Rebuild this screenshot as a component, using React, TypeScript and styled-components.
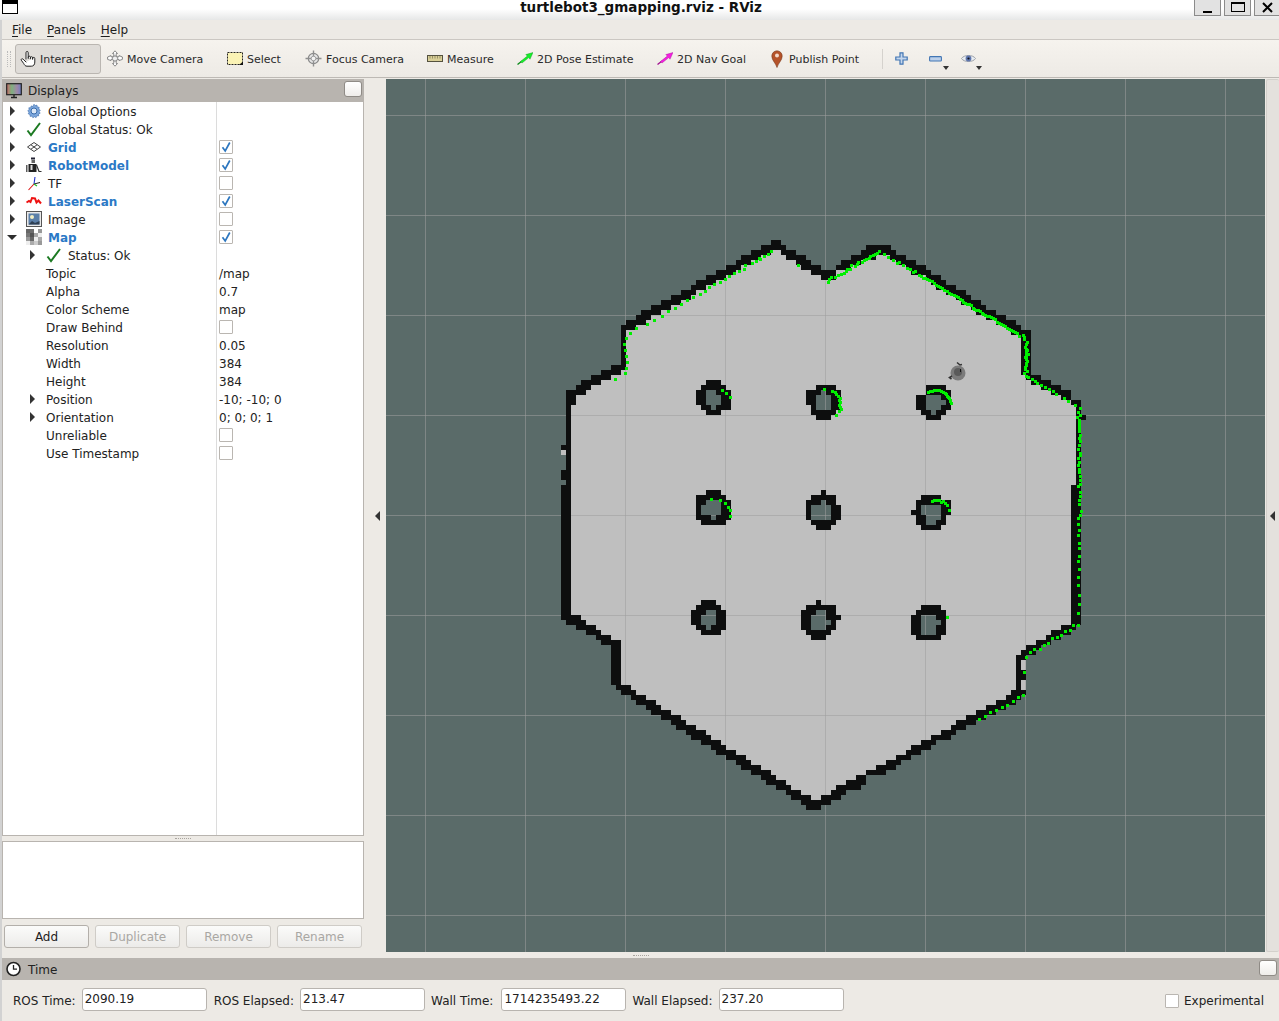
import React from "react";
import styled, { createGlobalStyle } from "styled-components";

const Global = createGlobalStyle`
  html, body { margin: 0; padding: 0; background: #edeae5; }
  * { box-sizing: border-box; }
  body { font-family: "DejaVu Sans", "Liberation Sans", sans-serif; font-size: 12px; color: #1d1d1d; }
`;

const Window = styled.div`width:1279px;height:1021px;overflow:hidden;display:flex;flex-direction:column;background:#edeae5;`;
const TitleBar = styled.div`height:20px;flex:none;display:grid;grid-template-columns:1fr auto 1fr;background:linear-gradient(#fff 0,#fff 45%,#e6e7e7 100%);overflow:hidden;padding-left:3px;`;
const AppGlyph = styled.div`width:16px;height:14px;margin-left:-1px;border:1px solid #000;border-top-width:4px;background:#fff;`;
const Title = styled.div`font-weight:700;font-size:13.5px;line-height:14px;color:#111;white-space:nowrap;`;
const WinButtons = styled.div`display:flex;justify-content:flex-end;gap:3px;`;
const WinBtn = styled.div<{ $w: number }>`width:${p => p.$w}px;height:16px;background:#e2e2e2;border:1px solid #8b8b8b;border-top:none;border-right-width:${p => p.$w < 27 ? 0 : 1}px;display:flex;align-items:center;justify-content:center;`;
const Body = styled.div`flex:1;min-height:0;display:flex;flex-direction:column;border-left:2px solid #d2d2d2;`;
const MenuBar = styled.div`height:20px;flex:none;display:flex;align-items:center;padding:0 0 0 10px;gap:15px;border-bottom:1px solid #cbc7c2;background:#edeae5;`;
const MenuItem = styled.span`font-size:12px;u{text-decoration-thickness:1px;text-underline-offset:2px;}`;
const ToolBar = styled.div`height:38px;flex:none;display:flex;align-items:center;padding:0 0 0 5px;background:linear-gradient(#f6f3ee,#edeae5);border-bottom:1px solid #bdb9b4;`;
const Grip = styled.div`width:4px;height:16px;margin-right:4px;border-left:1px dotted #bbb;border-right:1px dotted #bbb;`;
const ToolBtn = styled.div<{ $w: number; $on?: boolean }>`width:${p => p.$w}px;height:30px;flex:none;display:flex;align-items:center;gap:4px;padding-left:4px;font-size:11px;color:#2b2b2b;border-radius:3px;
  ${p => p.$on ? "background:#dfdcd8;border:1px solid #bab6b1;" : ""}`;
const ToolText = styled.span<{ $ml?: number }>`margin-top:2px;margin-left:${p => p.$ml ?? 0}px;`;
const ToolGap = styled.span`width:2px;flex:none;`;
const ToolSep = styled.div`width:1px;height:20px;background:#d5d2cd;margin:0 6px 0 3px;flex:none;`;
const IconBtn = styled.div<{ $w: number }>`width:${p => p.$w}px;height:30px;flex:none;position:relative;display:flex;align-items:center;padding-left:6px;`;
const Caret = styled.span<{ $r: number }>`position:absolute;right:${p => p.$r}px;bottom:4px;border:3px solid transparent;border-top:4px solid #333;border-bottom:none;`;
const Main = styled.div`flex:none;height:873px;margin-top:1px;display:flex;`;
const Dock = styled.div`width:362px;flex:none;display:flex;flex-direction:column;`;
const PanelHead = styled.div<{ $h: number }>`height:${p => p.$h}px;flex:none;display:flex;align-items:center;gap:6px;padding-left:4px;background:#b8b4af;color:#222;font-size:12px;position:relative;`;
const HeadText = styled.span<{ $dy: number }>`margin-top:${p => p.$dy}px;`;
const FloatBtn = styled.div`position:absolute;right:2px;top:2px;width:18px;height:16px;background:linear-gradient(#fff,#efedea);border:1px solid #8f8b86;border-radius:3px;`;
const Tree = styled.div`flex:1;min-height:0;background:linear-gradient(90deg,#fff 213px,#dcdcdc 213px,#dcdcdc 214px,#fff 214px);border:1px solid #b8b4af;border-top:none;`;
const Row = styled.div`height:18px;display:grid;grid-template-columns:214px 1fr;align-items:center;`;
const NameCell = styled.div<{ $indent: number }>`display:flex;align-items:center;padding-left:${p => p.$indent}px;height:18px;white-space:nowrap;`;
const ArrowSlot = styled.span`width:8px;flex:none;display:flex;justify-content:center;`;
const Tri = styled.span<{ $open?: boolean }>`display:block;width:0;height:0;${p => p.$open
  ? "border-left:5px solid transparent;border-right:5px solid transparent;border-top:5px solid #2d2d2d;margin-left:-1px;"
  : "border-top:5px solid transparent;border-bottom:5px solid transparent;border-left:5px solid #333;"}`;
const IconSlot = styled.span`width:16px;height:16px;flex:none;margin:0 6px 0 10px;display:flex;align-items:center;justify-content:center;`;
const Label = styled.span<{ $link?: boolean }>`padding-top:2px;${p => p.$link ? "font-weight:700;color:#2b79c6;" : "color:#222;"}`;
const PlainName = styled.span`color:#222;margin-left:10px;padding-top:2px;`;
const ValueCell = styled.div`padding:2px 0 0 2px;color:#222;display:flex;align-items:center;`;
const Check = styled.span<{ $dy?: number }>`width:14px;height:14px;margin-top:${p => p.$dy ?? 0}px;border:1px solid #bab6b1;background:#fff;border-radius:1px;display:flex;align-items:center;justify-content:center;flex:none;`;
const Splitter = styled.div<{ $h: number }>`height:${p => p.$h}px;flex:none;display:flex;align-items:center;justify-content:center;`;
const Dots = styled.i`display:block;width:16px;border-top:1px dotted #a8a49f;`;
const Description = styled.div`height:78px;flex:none;background:#fff;border:1px solid #b8b4af;`;
const BtnRow = styled.div`flex:none;height:33px;display:flex;gap:6px;padding:6px 0 4px 2px;`;
const PushBtn = styled.button<{ $off?: boolean }>`width:85px;height:23px;padding:0;font:12px "DejaVu Sans",sans-serif;border-radius:3px;
  color:${p => p.$off ? "#a9a7a3" : "#1d1d1d"};border:1px solid ${p => p.$off ? "#cfccc7" : "#b3afaa"};background:linear-gradient(#fbfbfa,#ecebe9);`;
const LeftHandle = styled.div`width:22px;flex:none;display:flex;align-items:center;justify-content:flex-end;padding-right:6px;`;
const TriLeft = styled.span`width:0;height:0;border-top:5px solid transparent;border-bottom:5px solid transparent;border-right:5px solid #333;`;
const Viewport = styled.div`width:879px;flex:none;background:#5a6b69;`;
const MapSvg = styled.svg`display:block;width:879px;height:873px;shape-rendering:crispEdges;`;
const RightHandle = styled.div`width:13px;margin-left:1px;flex:none;background:#e4e1dd;border:1px solid #d3d0cb;border-right:none;border-radius:2px;display:flex;align-items:center;justify-content:center;padding-right:2px;`;
const TimeRow = styled.div`flex:1;display:flex;align-items:center;padding:0 15px 2px 11px;font-size:12px;position:relative;`;
const TimeLabel = styled.span`margin:2px 6px 0 0;color:#222;white-space:nowrap;`;
const TimeInput = styled.input<{ $w: number; $gap: number; $ml?: number }>`width:${p => p.$w}px;height:23px;flex:none;margin-right:${p => p.$gap}px;margin-left:${p => p.$ml ?? 0}px;padding:0 2px 1px;font:12px "DejaVu Sans",sans-serif;color:#222;background:#fff;border:1px solid #b8b4af;border-radius:3px;outline:none;`;
const Experimental = styled.div`margin:2px 0 0 auto;display:flex;align-items:center;gap:5px;color:#222;`;

/* ---------- icons ---------- */
const S = ({ w = 16, h = 16, children }: { w?: number; h?: number; children: React.ReactNode }) => (
  <svg width={w} height={h} viewBox={`0 0 ${w} ${h}`} fill="none" style={{ flex: "none", display: "block" }}>{children}</svg>
);
const HandIcon = () => <S h={18}><path d="M6 9V2.6a1.1 1.1 0 0 1 2.2 0V8.500M8.200 7.300a1.100 1.100 0 0 1 2.200 0v1.500M10.400 7.800a1.100 1.100 0 0 1 2.200 0V9.300M12.600 8.500a1.100 1.100 0 0 1 2.200 0v3.500c0 2.700-1.300 4.200-3.500 4.200H7c-1.800 0-2.400-1.100-3.300-2.700L1.300 10.200c-.6-1.100.8-2 1.800-1L6 12" stroke="#222" strokeWidth="1" strokeLinecap="round" strokeLinejoin="round" fill="#fff"/></S>;
const MoveIcon = () => <S h={17}><path d="M8 .8l2.500 2.700H9.200v2.800h-2.400V3.500H5.500zM8 16.200l2.500-2.700H9.200v-2.800h-2.400v2.800H5.500zM.6 7l3.400-1.400v1.200h2v2.600H4v1.200L.6 9.400zM15.400 7L12 5.600v1.200h-2v2.600h2v1.200l3.400-1.200z" fill="#fff" stroke="#7d7d7d" strokeWidth=".9"/><circle cx="8" cy="8.500" r="2.600" fill="#eee" stroke="#8a8a8a"/></S>;
const SelectIcon = () => <S><rect x=".5" y="1.500" width="15" height="12" fill="#fbf3b5" stroke="#222" strokeDasharray="2 1"/><path d="M12 14h4v-3.500z" fill="#111"/></S>;
const FocusIcon = () => <S w={17} h={17}><circle cx="8.500" cy="8.500" r="5.200" fill="#e6e6e6" stroke="#8a8a8a" strokeWidth="1.200"/><path d="M8.500.5v16M.5 8.500h16" stroke="#8f8f8f" strokeWidth="1.400"/><circle cx="8.500" cy="8.500" r="2.300" fill="#f3f3f3" stroke="#a0a0a0"/></S>;
const MeasureIcon = () => <S h={12}><rect x=".5" y="2.500" width="15" height="6" fill="#d9cf97" stroke="#55523f"/><path d="M3 3v2.500M5.500 3v2.500M8 3v2.500M10.500 3v2.500M13 3v2.500" stroke="#7a7453" strokeWidth=".7"/></S>;
const ArrowIcon = ({ c, d }: { c: string; d: string }) => <S h={13}><path d="M.5 12.500L5 9" stroke={d} strokeWidth="1.300"/><path d="M16 .5L8.800 2.600l1.500 1.500L3.500 9.500l1.500 1.500 6.800-5.400 1.200 1.600z" fill={c} stroke={d} strokeWidth=".4"/></S>;
const PinIcon = () => <S w={12} h={18}><path d="M6 17.500C4.800 13 .8 10.500.8 6a5.200 5.200 0 0 1 10.400 0c0 4.500-4 7-5.200 11.500z" fill="#b5532a" stroke="#7b3a1f" strokeWidth=".6"/><circle cx="6" cy="5.500" r="2" fill="#f3d9c9"/></S>;
const PlusIcon = () => <S w={13} h={13}><path d="M5 .8h3V5h4.200v3H8v4.200H5V8H.8V5H5z" fill="#c5d6ec" stroke="#4276b4" strokeWidth="1.200"/></S>;
const MinusIcon = () => <S w={13} h={6}><rect x=".6" y=".6" width="11.800" height="4.400" rx=".8" fill="#bcd0ea" stroke="#4276b4" strokeWidth="1.100"/></S>;
const EyeIcon = () => <S w={15} h={11}><path d="M.5 5.500C3 1.500 12 1.500 14.500 5.500 12 9.500 3 9.500 .5 5.500z" fill="#e9edf2" stroke="#9aa0a8"/><circle cx="7.500" cy="5.500" r="2.900" fill="#5f76ad"/><circle cx="7.500" cy="5.500" r="1.100" fill="#10141f"/></S>;
const MonitorIcon = () => <S><rect x=".7" y=".7" width="14.600" height="11" fill="url(#mon)" stroke="#222" strokeWidth="1.200"/><path d="M5 14.500h6M8 12v2" stroke="#222" strokeWidth="1.400"/><defs><linearGradient id="mon" x1="0" x2="1" y1="0" y2="0"><stop offset="0" stopColor="#c86a6a"/><stop offset=".35" stopColor="#7fb07f"/><stop offset=".7" stopColor="#a088a8"/><stop offset="1" stopColor="#6d7fc0"/></linearGradient></defs></S>;
const GearIcon = () => <S><path d="M8 1.200l1.100 1.500 1.800-.6.400 1.900 1.900.3-.5 1.900 1.600 1-1.200 1.500 1.100 1.500-1.700.8.200 1.900-1.900-.1-.7 1.800-1.700-.9L6.900 14.800 6 13.100l-1.900.3L4 11.500l-1.800-.7.900-1.700L1.700 7.800l1.500-1.100-.4-1.900 1.900-.1.500-1.800 1.800.6z" fill="#7ba6dc" stroke="#3a6cab" strokeWidth=".6"/><circle cx="8" cy="8" r="3" fill="#dbe7f6" stroke="#3a6cab"/></S>;
const OkIcon = () => <S><path d="M1.500 9.500L5 14 14 2" stroke="#1c7a22" strokeWidth="2"/></S>;
const GridIcon = () => <S><path d="M8 3.500L14.500 8 8 12.500 1.500 8zM4.800 5.700L11.200 10.300M11.200 5.700L4.800 10.300" stroke="#444" strokeWidth="1" fill="#fff"/></S>;
const RobotIcon = () => <S><path d="M5 .5h4v2H5z" fill="#223"/><rect x="5.500" y="3" width="3.500" height="3" fill="#666"/><path d="M2.500 7h8v8h-8z" fill="#222"/><path d="M4.500 8h2v5h-2z" fill="#ddd"/><path d="M.8 8v7M10.500 8l2.500 6.500h2.500" stroke="#333" strokeWidth="1.200"/></S>;
const TFIcon = () => <S><path d="M8 9l6-1.500" stroke="#222" strokeWidth="1"/><path d="M8 9L9 2" stroke="#2233cc" strokeWidth="1.100"/><path d="M8 9l-5.500 6" stroke="#dd1111" strokeWidth="1.100"/><path d="M8 9l3 2" stroke="#22bb22" strokeWidth="1.100"/></S>;
const LaserIcon = () => <S><path d="M.5 9.500l2.500-1.500 1.500 1 1.500-4 3 .5 1.500 4 2-2 2.500 3" stroke="#ee1111" strokeWidth="2"/></S>;
const ImageIcon = () => <S><rect x=".5" y=".5" width="15" height="15" fill="#e9e9e9" stroke="#555"/><rect x="2.500" y="2.500" width="11" height="11" fill="#5b7fa8"/><circle cx="6" cy="6" r="2" fill="#f3efc4"/><path d="M2.500 13.500L6 10l3 2 4.500-2v3.500z" fill="#2e3f52"/></S>;
const MAP_CELLS = ["#666", "#6e6e6e", "#fff", "#999", "#777", "#555", "#aaa", "#eee", "#999", "#666", "#eee", "#aaa", "#eee", "#aaa", "#ccc", "#999"];
const MapIcon = () => (
  <S>{MAP_CELLS.map((c, i) => <rect key={i} x={(i % 4) * 4} y={Math.floor(i / 4) * 4} width={4} height={4} fill={c} />)}</S>
);
const ClockIcon = () => <S><circle cx="7.500" cy="8" r="6.500" fill="#fff" stroke="#222" strokeWidth="1.600"/><path d="M7.500 4v4.200h3.500" stroke="#222" strokeWidth="1.300"/></S>;
const Tick = () => <svg width="12" height="12" viewBox="0 0 12 12" fill="none" style={{display:"block"}}><path d="M2.500 6.200L5.200 10 9.800 1.500" stroke="#2c76bf" strokeWidth="1.700"/></svg>;

/* ---------- map data: page coordinates, 5px cells ---------- */
const rng = (a: number, b: number, ...s: number[]): [number, number[]][] => {
  const out: [number, number[]][] = [];
  for (let y = a; y <= b; y += 5) out.push([y, s]);
  return out;
};
const ROWS: [number, number[]][] = [
  [240,[771,781]],[245,[761,771,771,786,866,891]],[250,[751,771,781,796,861,896]],
  [255,[741,761,786,806,851,876,890,906]],[260,[736,751,796,811,841,861,896,916]],
  [265,[726,741,801,821,836,851,906,926]],[270,[716,736,811,836,836,836,911,931]],
  [275,[706,726,821,836,836,836,926,941]],[280,[696,716,931,946]],[285,[691,706,936,956]],
  [290,[681,696,946,966]],[295,[671,691,956,971]],[300,[661,681,961,981]],[305,[651,671,971,986]],
  [310,[641,661,976,996]],[315,[636,651,986,1006]],[320,[626,646,996,1016]],[325,[621,636,1006,1021]],
  [330,[621,626,1011,1031]],...rng(335,360,621,626,1021,1031),[365,[611,626,1021,1031]],[370,[601,621,1021,1031]],
  [375,[591,611,1026,1041]],[380,[581,601,1031,1051]],[385,[576,591,1041,1061]],[390,[566,586,1051,1071]],
  [395,[566,576,1061,1071]],[400,[566,576,1071,1081]],...rng(405,410,566,571,1076,1081),[415,[566,571,1076,1086]],
  ...rng(420,440,566,571,1076,1081),[445,[561,571,1076,1081]],...rng(450,465,566,571,1076,1081),
  ...rng(470,475,561,571,1076,1081),[480,[566,571,1076,1081]],...rng(485,610,561,571,1071,1081),
  [615,[561,581,1071,1081]],[620,[566,586,1071,1081]],[625,[576,596,1061,1076]],[630,[586,601,1051,1071]],
  [635,[596,611,1046,1061]],[640,[601,621,1036,1051]],[645,[611,621,1026,1041]],[650,[611,621,1021,1036]],
  [655,[611,621,1016,1026]],...rng(660,665,611,621,1016,1021),...rng(670,675,611,621,1016,1026),[680,[611,621,1016,1021]],
  [685,[616,631,1016,1021]],[690,[621,636,1011,1026]],[695,[631,646,1006,1021]],[700,[636,656,996,1016]],
  [705,[646,661,986,1006]],[710,[651,671,976,996]],[715,[661,681,966,986]],[720,[671,686,956,976]],
  [725,[676,696,951,966]],[730,[686,706,941,956]],[735,[691,711,931,951]],[740,[701,721,921,936]],
  [745,[711,726,911,931]],[750,[716,736,906,921]],[755,[726,746,896,911]],[760,[736,751,886,901]],
  [765,[741,761,876,896]],[770,[751,771,866,886]],[775,[761,776,856,866]],[780,[766,786,846,866]],
  [785,[776,791,836,861]],[790,[786,801,831,846]],[795,[791,811,821,841]],[800,[801,831]],[805,[806,821]],
];
const EXTRA_LIGHT = [[561,450],[1021,660],[1021,665],[1021,680],[1021,685]];
const OBSTACLES: [number, number, string[]][] = [
  [696,380,["..###..",".#####.","##oo###","##ooo##","##ooo##",".##o###","..###.."]],
  [806,385,["..####.","###o###","##ooo##","##ooo##",".#ooo##",".#####.","..###.."]],
  [916,385,["..####.","..#####","##ooo##","##oooo#","##ooo##",".##o##.","..###.."]],
  [696,490,["..###..","######.","##ooo##","#oooo##","#oooo##","###o###",".#####."]],
  [806,490,["...#...",".#####.","###o##.","#oooo##","#oooo##","#oooo##",".#####.","..###.."]],
  [911,495,["..####..",".#######",".#oooo##","##oooo##",".##ooo#.",".##oo##.","..####.."]],
  [691,600,["..###..",".#####.","###oo##","##ooo##","##ooo##",".##o###","..####."]],
  [801,600,["...#....",".######.","###oo##.","##ooo###","##oooo#.","##ooo##.",".#####..","..###..."]],
  [911,605,["..####.",".######","##ooo##","##oooo#","##ooo##","##ooo##",".#####."]],
];
const cell = (x: number, y: number, w = 5) => `M${x} ${y}h${w}v5h${-w}z`;
let blackD = "", lightD = "", holeD = "";
ROWS.forEach(([y, s]) => {
  for (let i = 0; i < s.length; i += 2) blackD += cell(s[i], y, s[i + 1] - s[i]);
  for (let i = 0; i + 3 < s.length; i += 4) if (s[i + 2] > s[i + 1]) lightD += cell(s[i + 1], y, s[i + 2] - s[i + 1]);
});
EXTRA_LIGHT.forEach(([x, y]) => { lightD += cell(x, y); });
OBSTACLES.forEach(([ox, oy, art]) => art.forEach((r, j) => [...r].forEach((c, i) => {
  if (c === "#") blackD += cell(ox + i * 5, oy + j * 5);
  if (c === "o") holeD += cell(ox + i * 5, oy + j * 5);
})));

const SCANS: [number, number, number[]][] = [
  [600,230,[46,448,76,430,79,415,82,397,79,379,76,361,73,343,79,325,91,310,109,295,142,283,163,271,187,259,205,244,226,235,244,223,262,211,280,202,301,193,316,184,328,172,343,163,361,157,376,148,388,139,403,130,418,124,433,118,436,106,457,100,469,94,478,85,481,88,493,79,505,73,514,64,595,106,685,157,688,148,694,142,706,142,715,136,724,133,733,130,739,124,742,118,751,118,754,106,766,109,772,103,775,97,787,97,793,91,799,88,808,85,811,79,820,76,826,73,832,70,838,64,853,73,865,82,880,91,892,100,367,481,379,490,391,502,673,478,697,484,706,487,709,493,715,499,721,505,718,511,721,517,718,526,721,532,724,538,718,544,709,556]],
  [890,230,[10,91,22,100,28,97,40,106,52,115,61,118,70,127,76,124,88,136,94,139,100,145,106,145,112,148,118,151,127,154,133,160,139,166,145,169,151,172,157,175,163,181,172,184,178,190,184,193,193,196,199,199,205,202,211,208,217,211,220,217,226,220,232,223,238,223,244,226,250,235,253,238,259,241,265,241,271,244,277,250,280,253,286,256,292,259,298,259,304,262,310,265,316,268,322,277,328,280,334,283,340,286,346,289,352,295,358,298,364,301,370,304,376,307,382,310,388,319,400,316,403,322,403,328,412,337,409,343,406,352,409,358,412,361,409,367,409,373,415,373,409,379,406,382,409,388,412,394,409,400,409,406,406,412,406,418,412,424,403,430,409,439,415,442,427,448,436,454,442,460,454,466,466,472,478,478,490,484,499,493,523,505,535,514,556,526,571,535,565,547,571,556,562,562,568,570,568,576,568,582,568,588,568,594,115,487,121,484,127,484,133,481,142,481,148,481,154,484,160,487,166,490,169,493,172,499,175,502,178,505,181,511,181,514,184,521]],
  [840,420,[718,5,718,11,718,20,718,26,718,35,721,47,718,56,721,65,718,77,715,88,721,100,721,106,715,115,718,127,715,136,718,148,718,157,721,169,721,181,721,193,715,199,721,217,721,229,718,241,718,253,724,274,721,286,715,295,715,313,718,331,715,346,718,370,718,385,718,409,715,424,718,448,715,472,715,496,718,526,718,553,715,580,700,616,715,616,691,631,676,634,664,646,652,652,637,655,625,670,613,676,601,688,583,688,571,697,559,712,553,757,550,826,535,832,520,844,502,856,487,862,469,871,451,877,436,889,418,898,277,244,283,241,292,241,298,241,304,247,310,244,316,250,322,256,328,271,322,592]],
  [550,370,[484,388,511,391,526,400,535,412,541,421,541,439]],
];
let greenD = "";
SCANS.forEach(([ox, oy, pts]) => {
  for (let i = 0; i < pts.length; i += 2) {
    const x = Math.round(ox + pts[i] / 3 - 1.5), y = Math.round(oy + pts[i + 1] / 3 - 1.5);
    greenD += `M${x} ${y}h3v3h-3z`;
  }
});
const V_LINES = [425, 525, 625, 725, 825, 925, 1025, 1125, 1225];
const H_LINES = [115, 215, 315, 415, 515, 615, 715, 815, 915];

const MapView = () => (
  <MapSvg viewBox="386 79 879 873">
    <path d={lightD} fill="#bfbfbf" />
    <path d={holeD} fill="#5a6b69" />
    {V_LINES.map(x => <rect key={x} x={x} y={79} width={1} height={873} fill="rgba(158,158,158,.55)" />)}
    {H_LINES.map(y => <rect key={y} x={386} y={y} width={879} height={1} fill="rgba(158,158,158,.55)" />)}
    <path d={blackD} fill="#0d0e0e" />
    <path d={greenD} fill="#00ef00" />
    <g style={{ shapeRendering: "auto" }}>
      <circle cx="958" cy="373" r="7.500" fill="#7b7b7b" />
      <circle cx="958" cy="372" r="4" fill="#5a5a5a" />
      <path d="M957 362.500l3 2.500 2-.5M952 376l-2.500 1.500 2 1.500" stroke="#333" strokeWidth="1.600" fill="none" />
      <rect x="960" y="369" width="1" height="3" fill="#111" />
    </g>
  </MapSvg>
);

/* ---------- tree ---------- */
type Item = { name: string; icon?: React.ReactNode; link?: boolean; check?: boolean; value?: string; open?: boolean; arrow?: boolean };
const TOP: Item[] = [
  { name: "Global Options", icon: <GearIcon />, arrow: true },
  { name: "Global Status: Ok", icon: <OkIcon />, arrow: true },
  { name: "Grid", icon: <GridIcon />, link: true, check: true, arrow: true },
  { name: "RobotModel", icon: <RobotIcon />, link: true, check: true, arrow: true },
  { name: "TF", icon: <TFIcon />, check: false, arrow: true },
  { name: "LaserScan", icon: <LaserIcon />, link: true, check: true, arrow: true },
  { name: "Image", icon: <ImageIcon />, check: false, arrow: true },
  { name: "Map", icon: <MapIcon />, link: true, check: true, arrow: true, open: true },
];
const SUB: Item[] = [
  { name: "Topic", value: "/map" },
  { name: "Alpha", value: "0.7" },
  { name: "Color Scheme", value: "map" },
  { name: "Draw Behind", check: false },
  { name: "Resolution", value: "0.05" },
  { name: "Width", value: "384" },
  { name: "Height", value: "384" },
  { name: "Position", value: "-10; -10; 0", arrow: true },
  { name: "Orientation", value: "0; 0; 0; 1", arrow: true },
  { name: "Unreliable", check: false },
  { name: "Use Timestamp", check: false },
];
const Value = ({ it }: { it: Item }) => (
  <ValueCell>
    {it.value}
    {it.check !== undefined && <Check $dy={-2}>{it.check && <Tick />}</Check>}
  </ValueCell>
);

const TOOLS = [
  { t: "Move Camera", w: 120, i: <MoveIcon /> },
  { t: "Select", w: 78, i: <SelectIcon /> },
  { t: "Focus Camera", w: 122, i: <FocusIcon /> },
  { t: "Measure", w: 90, i: <MeasureIcon /> },
  { t: "2D Pose Estimate", w: 140, i: <ArrowIcon c="#16f02a" d="#0a8a18" /> },
  { t: "2D Nav Goal", w: 114, i: <ArrowIcon c="#f51ee0" d="#a0108f" /> },
];

export default function App() {
  return (
    <>
      <Global />
      <Window>
        <TitleBar>
          <AppGlyph />
          <Title>turtlebot3_gmapping.rviz - RViz</Title>
          <WinButtons>
            <WinBtn $w={27}><svg width="10" height="10" viewBox="0 0 10 10" style={{marginTop:2}}><rect x="0" y="7" width="9" height="2" fill="#000"/></svg></WinBtn>
            <WinBtn $w={27}><svg width="14" height="11" viewBox="0 0 14 11"><rect x=".5" y=".5" width="13" height="9" fill="none" stroke="#000"/><rect x="0" y="0" width="14" height="2" fill="#000"/></svg></WinBtn>
            <WinBtn $w={25}><svg width="11" height="11" viewBox="0 0 11 11"><path d="M1 1l9 9M10 1l-9 9" stroke="#000" strokeWidth="2"/></svg></WinBtn>
          </WinButtons>
        </TitleBar>
        <Body>
          <MenuBar>
            <MenuItem><u>F</u>ile</MenuItem>
            <MenuItem><u>P</u>anels</MenuItem>
            <MenuItem><u>H</u>elp</MenuItem>
          </MenuBar>
          <ToolBar>
            <Grip />
            <ToolBtn $w={86} $on><HandIcon /><ToolText>Interact</ToolText></ToolBtn>
            <ToolGap />
            {TOOLS.map(t => <ToolBtn key={t.t} $w={t.w}>{t.i}<ToolText>{t.t}</ToolText></ToolBtn>)}
            <ToolBtn $w={112}><PinIcon /><ToolText $ml={2}>Publish Point</ToolText></ToolBtn>
            <ToolSep />
            <IconBtn $w={34}><PlusIcon /></IconBtn>
            <IconBtn $w={32}><MinusIcon /><Caret $r={6} /></IconBtn>
            <IconBtn $w={30}><EyeIcon /><Caret $r={3} /></IconBtn>
          </ToolBar>
          <Main>
            <Dock>
              <PanelHead $h={23}><MonitorIcon /><HeadText $dy={0}>Displays</HeadText><FloatBtn /></PanelHead>
              <Tree>
                {TOP.map(it => (
                  <Row key={it.name}>
                    <NameCell $indent={5}>
                      <ArrowSlot><Tri $open={it.open} /></ArrowSlot>
                      <IconSlot>{it.icon}</IconSlot>
                      <Label $link={it.link}>{it.name}</Label>
                    </NameCell>
                    <Value it={it} />
                  </Row>
                ))}
                <Row>
                  <NameCell $indent={25}>
                    <ArrowSlot><Tri /></ArrowSlot>
                    <IconSlot><OkIcon /></IconSlot>
                    <Label>Status: Ok</Label>
                  </NameCell>
                  <ValueCell />
                </Row>
                {SUB.map(it => (
                  <Row key={it.name}>
                    <NameCell $indent={25}>
                      <ArrowSlot>{it.arrow && <Tri />}</ArrowSlot>
                      <PlainName>{it.name}</PlainName>
                    </NameCell>
                    <Value it={it} />
                  </Row>
                ))}
              </Tree>
              <Splitter $h={5}><Dots /></Splitter>
              <Description />
              <BtnRow>
                <PushBtn>Add</PushBtn>
                <PushBtn $off>Duplicate</PushBtn>
                <PushBtn $off>Remove</PushBtn>
                <PushBtn $off>Rename</PushBtn>
              </BtnRow>
            </Dock>
            <LeftHandle><TriLeft /></LeftHandle>
            <Viewport><MapView /></Viewport>
            <RightHandle><TriLeft /></RightHandle>
          </Main>
          <Splitter $h={6}><Dots /></Splitter>
          <PanelHead $h={22}><ClockIcon /><HeadText $dy={2}>Time</HeadText><FloatBtn /></PanelHead>
          <TimeRow>
            <TimeLabel>ROS Time:</TimeLabel>
            <TimeInput $w={125} $gap={7} readOnly value="2090.19" />
            <TimeLabel>ROS Elapsed:</TimeLabel>
            <TimeInput $w={125} $gap={6} readOnly value="213.47" />
            <TimeLabel>Wall Time:</TimeLabel>
            <TimeInput $w={125} $gap={6} $ml={2} readOnly value="1714235493.22" />
            <TimeLabel>Wall Elapsed:</TimeLabel>
            <TimeInput $w={125} $gap={0} readOnly value="237.20" />
            <Experimental><Check />Experimental</Experimental>
          </TimeRow>
        </Body>
      </Window>
    </>
  );
}
